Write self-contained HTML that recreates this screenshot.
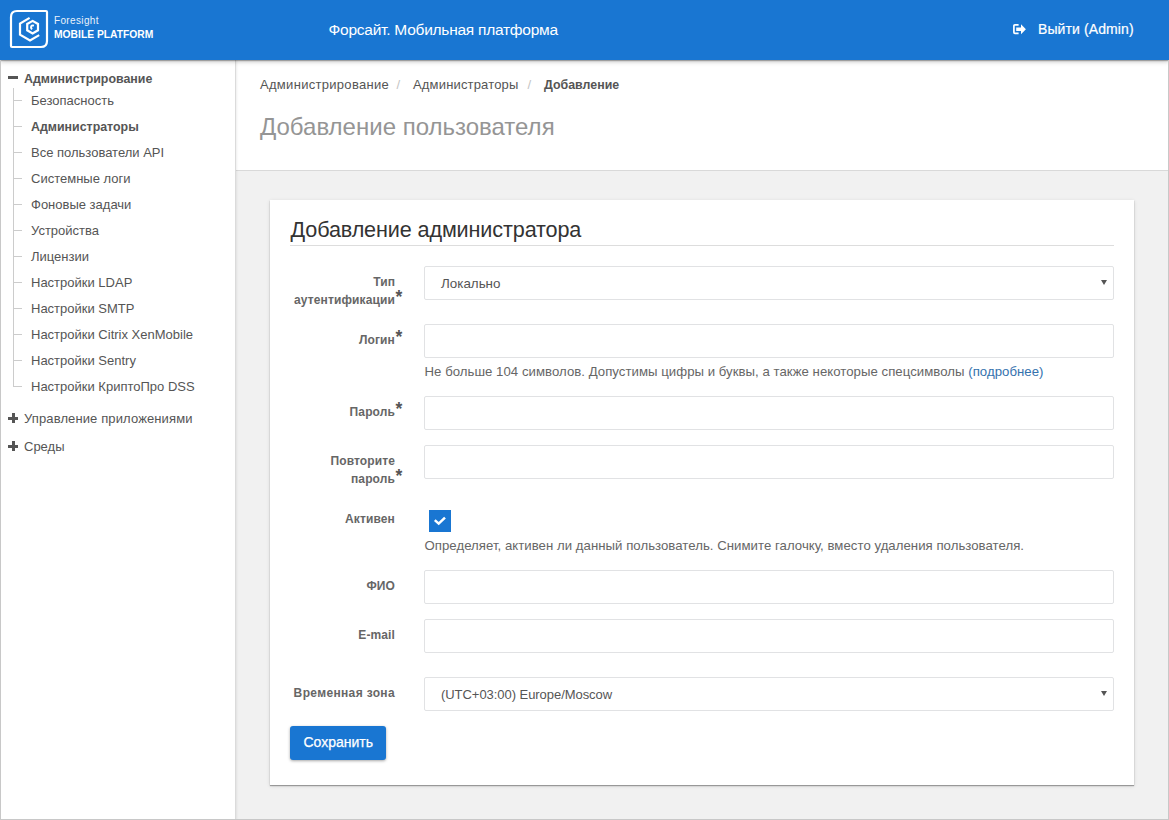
<!DOCTYPE html>
<html><head><meta charset="utf-8">
<style>
*{box-sizing:border-box}
html,body{margin:0;padding:0}
body{width:1169px;height:820px;overflow:hidden;position:relative;background:#f1f1f1;font-family:"Liberation Sans",sans-serif;color:#555}
.abs{position:absolute}
#hdr{left:0;top:0;width:1169px;height:60px;background:#1976d2;z-index:5;box-shadow:0 1px 1px rgba(0,0,0,.25),0 1px 5px rgba(0,0,0,.3)}
#frame{left:0;top:60px;width:1169px;height:760px;border:1px solid #c8c8c8;border-top:0;z-index:6;pointer-events:none}
#side{left:0;top:60px;width:236px;height:760px;background:#fff;border-right:1px solid #dbdbdb;box-shadow:1px 0 2px rgba(0,0,0,.07);z-index:2}
#chead{left:236px;top:60px;width:933px;height:111px;background:#fff;border-bottom:1px solid #d9d9d9;z-index:1}
.t{position:absolute;white-space:nowrap;line-height:1}
.si{font-size:13px;color:#555}
.tick{position:absolute;left:13px;width:9px;height:1px;background:#ccc}
#card{left:270px;top:200px;width:864px;height:585px;background:#fff;box-shadow:0 1px 1px rgba(0,0,0,.32),0 1px 4px rgba(0,0,0,.12);z-index:1}
.inp{position:absolute;left:424px;width:690px;height:34px;border:1px solid #e1e2e4;border-radius:2px;background:#fff;z-index:2}
.lbl{font-size:12px;font-weight:bold;color:#666;text-align:right;letter-spacing:0.12px}
.help{font-size:13px;color:#666;letter-spacing:0.035px}
.star{position:absolute;font-size:17.5px;font-weight:bold;color:#555}
.arrow{position:absolute;right:6.5px;top:13px;width:0;height:0;border-left:3.4px solid transparent;border-right:3.4px solid transparent;border-top:5.5px solid #555}
</style></head><body>
<div id="hdr" class="abs">
  <svg class="abs" style="left:0;top:0" width="60" height="60" viewBox="0 0 60 60">
    <path d="M17 11 H46 Q47 11 47 12 V41 Q47 47 41 47 H12 Q11 47 11 46 V17 Q11 11 17 11 Z" fill="none" stroke="#fff" stroke-width="2.2"/>
    <path d="M29.6 17.9 L20 23.6 V34.6 L30 40.4 L39.2 35.1" fill="none" stroke="#fff" stroke-width="2.2" stroke-linecap="butt"/>
    <path d="M32.6 20.9 L38 24 V30.3 L32.6 33.4 L27.2 30.3 V24 Z" fill="none" stroke="#fff" stroke-width="2.2"/>
    <path d="M34 25.6 Q31.2 24.9 31 27.3 Q31 28.6 32.2 29.2" fill="none" stroke="#fff" stroke-width="2"/>
  </svg>
  <div class="t" style="left:54px;top:16.2px;font-size:10px;letter-spacing:0.35px;color:#eaf2fb">Foresight</div>
  <div class="t" style="left:54px;top:29.8px;font-size:10.3px;font-weight:bold;color:#fff">MOBILE PLATFORM</div>
  <div class="t" style="left:328.5px;top:22px;font-size:15.5px;letter-spacing:-0.25px;color:#fff">Форсайт. Мобильная платформа</div>
  <svg class="abs" style="left:1012px;top:23px" width="15" height="12" viewBox="0 0 15 12">
    <path d="M6.6 1.9 H2.9 Q1.9 1.9 1.9 2.9 V9.3 Q1.9 10.3 2.9 10.3 H6.6" fill="none" stroke="#fff" stroke-width="1.7"/>
    <path d="M4.2 4.5 H9 V1.2 L13.9 6.2 L9 11.2 V7.9 H4.2 Z" fill="#fff"/>
  </svg>
  <div class="t" style="left:1038px;top:22px;font-size:14px;letter-spacing:0.1px;color:#fff;-webkit-text-stroke:0.2px #fff">Выйти (Admin)</div>
</div>
<div id="frame" class="abs"></div>
<div id="side" class="abs">
  <div class="abs" style="left:8px;top:16px;width:10px;height:3px;background:#555"></div>
  <div class="t" style="left:24px;top:13px;font-size:12.4px;font-weight:bold;color:#555">Администрирование</div>
  <div class="abs" style="left:13px;top:28px;width:1px;height:299px;background:#ccc"></div>
  <div class="tick" style="top:40px"></div>
  <div class="t si" style="left:31px;top:34px">Безопасность</div>
  <div class="tick" style="top:66px"></div>
  <div class="t si" style="left:31px;top:61px;font-size:12.4px;font-weight:bold">Администраторы</div>
  <div class="tick" style="top:92px"></div>
  <div class="t si" style="left:31px;top:86px">Все пользователи API</div>
  <div class="tick" style="top:118px"></div>
  <div class="t si" style="left:31px;top:112px">Системные логи</div>
  <div class="tick" style="top:144px"></div>
  <div class="t si" style="left:31px;top:138px">Фоновые задачи</div>
  <div class="tick" style="top:170px"></div>
  <div class="t si" style="left:31px;top:164px">Устройства</div>
  <div class="tick" style="top:196px"></div>
  <div class="t si" style="left:31px;top:190px">Лицензии</div>
  <div class="tick" style="top:222px"></div>
  <div class="t si" style="left:31px;top:216px">Настройки LDAP</div>
  <div class="tick" style="top:248px"></div>
  <div class="t si" style="left:31px;top:242px">Настройки SMTP</div>
  <div class="tick" style="top:274px"></div>
  <div class="t si" style="left:31px;top:268px">Настройки Citrix XenMobile</div>
  <div class="tick" style="top:300px"></div>
  <div class="t si" style="left:31px;top:294px">Настройки Sentry</div>
  <div class="tick" style="top:326px"></div>
  <div class="t si" style="left:31px;top:320px">Настройки КриптоПро DSS</div>
  <div class="abs" style="left:8px;top:356.5px;width:10px;height:3px;background:#555"></div>
  <div class="abs" style="left:11.5px;top:353px;width:3px;height:10px;background:#555"></div>
  <div class="t si" style="left:24px;top:352px;letter-spacing:0.12px">Управление приложениями</div>
  <div class="abs" style="left:8px;top:384.5px;width:10px;height:3px;background:#555"></div>
  <div class="abs" style="left:11.5px;top:381px;width:3px;height:10px;background:#555"></div>
  <div class="t si" style="left:24px;top:380px">Среды</div>
</div>
<div id="chead" class="abs">
  <div class="t" style="left:24px;top:18px;font-size:13px;letter-spacing:0.3px;color:#555">Администрирование</div>
  <div class="t" style="left:160.5px;top:18px;font-size:13px;color:#c4c4c4">/</div>
  <div class="t" style="left:177px;top:18px;font-size:13px;letter-spacing:0.17px;color:#555">Администраторы</div>
  <div class="t" style="left:291.5px;top:18px;font-size:13px;color:#c4c4c4">/</div>
  <div class="t" style="left:308px;top:19px;font-size:12.4px;font-weight:bold;color:#555">Добавление</div>
  <div class="t" style="left:24px;top:55px;font-size:24px;color:#959595">Добавление пользователя</div>
</div>
<div id="card" class="abs"></div>
<div class="t" style="left:290.5px;top:218.8px;font-size:21.6px;letter-spacing:-0.12px;color:#333;z-index:3">Добавление администратора</div>
<div class="abs" style="left:290px;top:245px;width:824px;height:1px;background:#ddd;z-index:3"></div>

<div class="inp" style="top:266px"><div class="t" style="left:16px;top:10px;font-size:13.4px;color:#555">Локально</div><div class="arrow"></div></div>
<div class="inp" style="top:324px"></div>
<div class="inp" style="top:396px"></div>
<div class="inp" style="top:445px"></div>
<div class="inp" style="top:570px"></div>
<div class="inp" style="top:619px"></div>
<div class="inp" style="top:677px"><div class="t" style="left:16px;top:10.2px;font-size:13px;letter-spacing:-0.05px;color:#555">(UTC+03:00) Europe/Moscow</div><div class="arrow"></div></div>

<div class="t lbl" style="right:774px;top:273.0px;line-height:18px;z-index:3">Тип<br>аутентификации</div>
<div class="t lbl" style="right:774px;top:334.0px;z-index:3">Логин</div>
<div class="t lbl" style="right:774px;top:406.0px;z-index:3">Пароль</div>
<div class="t lbl" style="right:774px;top:452.0px;line-height:18px;z-index:3">Повторите<br>пароль</div>
<div class="t lbl" style="right:774px;top:513.0px;z-index:3">Активен</div>
<div class="t lbl" style="right:774px;top:580.0px;z-index:3">ФИО</div>
<div class="t lbl" style="right:774px;top:628.5px;z-index:3">E-mail</div>
<div class="t lbl" style="right:774px;top:687px;letter-spacing:0.35px;z-index:3">Временная зона</div>
<div class="t star" style="left:395.5px;top:288.5px;z-index:3">*</div>
<div class="t star" style="left:395.5px;top:328.5px;z-index:3">*</div>
<div class="t star" style="left:395.5px;top:400.5px;z-index:3">*</div>
<div class="t star" style="left:395.5px;top:467.5px;z-index:3">*</div>
<div class="t help" style="left:424.5px;top:364.7px;font-size:13.2px;z-index:3">Не больше 104 символов. Допустимы цифры и буквы, а также некоторые спецсимволы <span style="color:#3472ae">(подробнее)</span></div>
<div class="abs" style="left:429px;top:510px;width:22px;height:22px;background:#1976d2;z-index:3"><svg width="22" height="22" viewBox="0 0 22 22" style="position:absolute;left:0;top:0"><path d="M5.8 10.1 L9.7 13.6 L16 7.6" fill="none" stroke="#fff" stroke-width="2.5"/></svg></div>
<div class="t help" style="left:424.5px;top:538.5px;font-size:13.2px;z-index:3">Определяет, активен ли данный пользователь. Снимите галочку, вместо удаления пользователя.</div>
<div class="abs" style="left:290px;top:726px;width:96px;height:34px;background:#1976d2;border-radius:3px;box-shadow:0 1px 3px rgba(0,0,0,.35);z-index:3"><div class="t" style="left:13.4px;top:9px;font-size:14px;color:#fff;-webkit-text-stroke:0.25px #fff">Сохранить</div></div>
</body></html>
